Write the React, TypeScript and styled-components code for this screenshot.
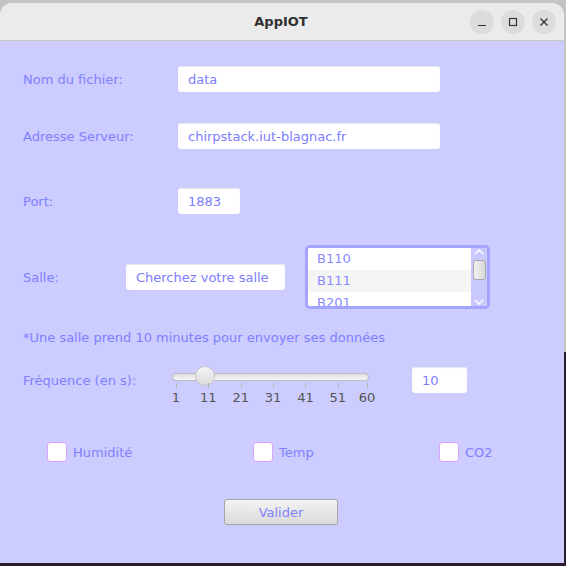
import { FunctionComponent } from "react";
import styled, { createGlobalStyle } from "styled-components";

const GlobalStyle = createGlobalStyle`
  html, body {
    margin: 0;
    padding: 0;
    width: 566px;
    height: 566px;
    overflow: hidden;
    background: linear-gradient(#c4c4c4 0, #c4c4c4 352px, #2b1a2b 352px);
    font-family: "DejaVu Sans", Verdana, sans-serif;
  }
`;

const textColor = "#8080ff";

const Window = styled.div`
  margin-top: 3px;
  width: 564px;
  height: 560px;
  border-radius: 12px 12px 0 0;
  overflow: hidden;
  display: flex;
  flex-direction: column;
  background: #ccccff;
`;

const TitleBar = styled.div`
  height: 37px;
  flex: none;
  background: #ebebeb;
  border-bottom: 1px solid #c6c6c6;
  display: flex;
  align-items: center;
  justify-content: center;
  position: relative;
`;

const Title = styled.span`
  font-family: "DejaVu Sans", sans-serif;
  font-weight: 700;
  font-size: 13px;
  color: #303030;
  margin-left: -2px;
`;

const WinButtons = styled.div`
  position: absolute;
  right: 8px;
  top: 7px;
  display: flex;
  gap: 7px;
`;

const WinButton = styled.div`
  width: 24px;
  height: 24px;
  border-radius: 50%;
  background: #dcdcdc;
  display: flex;
  align-items: center;
  justify-content: center;
`;

const Content = styled.div`
  flex: 1;
  padding: 25px 0 0 23px;
  display: flex;
  flex-direction: column;
  color: ${textColor};
  font-size: 13px;
`;

const Row = styled.div<{ $top: number; $height?: number }>`
  display: flex;
  align-items: center;
  margin-top: ${(p) => p.$top}px;
  height: ${(p) => p.$height ?? 26}px;
`;

const Label = styled.div<{ $width: number }>`
  width: ${(p) => p.$width}px;
  flex: none;
  padding-top: 1px;
`;

const Field = styled.div<{ $width: number }>`
  width: ${(p) => p.$width}px;
  height: 26px;
  box-sizing: border-box;
  background: #fff;
  border-radius: 3px;
  box-shadow: inset 0 1px 1px #e6e6f0;
  padding-left: 10px;
  display: flex;
  align-items: center;
  color: #7c7cff;
  font-size: 13px;
  flex: none;
`;

const List = styled.div`
  margin-left: 20px;
  width: 185px;
  height: 64px;
  box-sizing: border-box;
  border: 3px solid #a4a4ff;
  border-radius: 5px;
  background: #fff;
  display: flex;
  overflow: hidden;
`;

const Items = styled.div`
  flex: 1;
  overflow: hidden;
`;

const Item = styled.div<{ $odd: boolean }>`
  height: 22px;
  line-height: 22px;
  padding-left: 9px;
  font-size: 13px;
  color: #8a8aff;
  background: ${(p) => (p.$odd ? "#f5f5f5" : "#fff")};
`;

const ScrollBar = styled.div`
  width: 16px;
  flex: none;
  background: #c9c9ff;
  display: flex;
  flex-direction: column;
  align-items: center;
  justify-content: space-between;
  padding: 1px 0;
`;

const Thumb = styled.div`
  width: 11px;
  height: 18px;
  margin-top: -14px;
  border-radius: 3px;
  border: 1px solid #a8a8a8;
  background: linear-gradient(to right, #f2f2f2, #d8d8d8);
`;

const Note = styled.div`
  margin-top: 21px;
  line-height: 16px;
`;

const SliderBox = styled.div`
  position: relative;
  width: 197px;
  height: 26px;
  margin-right: 43px;
  flex: none;
`;

const Track = styled.div`
  position: absolute;
  left: 0;
  top: 6px;
  width: 195px;
  height: 6px;
  border-radius: 4px;
  border: 1px solid #bdbdbd;
  background: linear-gradient(#dedede, #f6f6f6);
`;

const Knob = styled.div`
  position: absolute;
  top: -1px;
  width: 20px;
  height: 20px;
  border-radius: 50%;
  box-sizing: border-box;
  border: 1px solid #c4c4c4;
  background: linear-gradient(#f4f4f4, #dcdcdc);
`;

const Tick = styled.div`
  position: absolute;
  top: 16px;
  width: 1px;
  height: 5px;
  background: #b4b4b4;
`;

const TickLabel = styled.div`
  position: absolute;
  top: 23px;
  transform: translateX(-50%);
  color: #555;
  font-size: 13px;
`;

const Checks = styled.div`
  display: grid;
  grid-template-columns: 206px 186px auto;
  margin-top: 49px;
  padding-left: 24px;
`;

const Check = styled.label`
  display: flex;
  align-items: center;
  gap: 6px;
  height: 20px;
`;

const Box = styled.span`
  width: 20px;
  height: 20px;
  box-sizing: border-box;
  border: 1px solid #d9a6ff;
  border-radius: 3px;
  background: #fff;
`;

const ButtonRow = styled.div`
  display: flex;
  padding-left: 201px;
  margin-top: 37px;
`;

const Button = styled.button`
  width: 114px;
  height: 26px;
  border: 1px solid #a6a6a6;
  border-radius: 3px;
  background: linear-gradient(#f3f3f3, #dadada);
  color: ${textColor};
  font-family: "DejaVu Sans", sans-serif;
  font-size: 13px;
  padding: 0;
`;

const ticks = [1, 11, 21, 31, 41, 51, 60];
const tickX = (v: number) => 4 + ((v - 1) / 59) * 191;

const App: FunctionComponent = () => {
  return (
    <>
      <GlobalStyle />
      <Window>
        <TitleBar>
          <Title>AppIOT</Title>
          <WinButtons>
            <WinButton>
              <svg width="10" height="10" viewBox="0 0 10 10">
                <path d="M1 8.5h8" stroke="#333" strokeWidth="1.2" />
              </svg>
            </WinButton>
            <WinButton>
              <svg width="10" height="10" viewBox="0 0 10 10">
                <rect x="1.5" y="1.5" width="7" height="7" fill="none" stroke="#333" strokeWidth="1.2" />
              </svg>
            </WinButton>
            <WinButton>
              <svg width="10" height="10" viewBox="0 0 10 10">
                <path d="M1.5 1.5l7 7M8.5 1.5l-7 7" stroke="#333" strokeWidth="1.3" />
              </svg>
            </WinButton>
          </WinButtons>
        </TitleBar>

        <Content>
          <Row $top={0}>
            <Label $width={155}>Nom du fichier:</Label>
            <Field $width={262}>data</Field>
          </Row>
          <Row $top={31}>
            <Label $width={155}>Adresse Serveur:</Label>
            <Field $width={262}>chirpstack.iut-blagnac.fr</Field>
          </Row>
          <Row $top={39}>
            <Label $width={155}>Port:</Label>
            <Field $width={62}>1883</Field>
          </Row>
          <Row $top={31} $height={64}>
            <Label $width={103}>Salle:</Label>
            <Field $width={159}>Cherchez votre salle</Field>
            <List>
              <Items>
                {["B110", "B111", "B201"].map((s, i) => (
                  <Item key={s} $odd={i % 2 === 1}>
                    {s}
                  </Item>
                ))}
              </Items>
              <ScrollBar>
                <svg width="10" height="6" viewBox="0 0 10 6">
                  <path d="M1 5l4-4 4 4" fill="none" stroke="#fff" strokeWidth="1.5" />
                </svg>
                <Thumb />
                <svg width="10" height="6" viewBox="0 0 10 6">
                  <path d="M1 1l4 4 4-4" fill="none" stroke="#fff" strokeWidth="1.5" />
                </svg>
              </ScrollBar>
            </List>
          </Row>
          <Note>*Une salle prend 10 minutes pour envoyer ses données</Note>
          <Row $top={21}>
            <Label $width={149}>Fréquence (en s):</Label>
            <SliderBox>
              <Track />
              <Knob style={{ left: tickX(10) - 10 }} />
              {ticks.map((t) => (
                <Tick key={`t${t}`} style={{ left: tickX(t) }} />
              ))}
              {ticks.map((t) => (
                <TickLabel key={`l${t}`} style={{ left: tickX(t) }}>
                  {t}
                </TickLabel>
              ))}
            </SliderBox>
            <Field $width={55}>10</Field>
          </Row>
          <Checks>
            <Check>
              <Box />
              Humidité
            </Check>
            <Check>
              <Box />
              Temp
            </Check>
            <Check>
              <Box />
              CO2
            </Check>
          </Checks>
          <ButtonRow>
            <Button>Valider</Button>
          </ButtonRow>
        </Content>
      </Window>
    </>
  );
};

export default App;
